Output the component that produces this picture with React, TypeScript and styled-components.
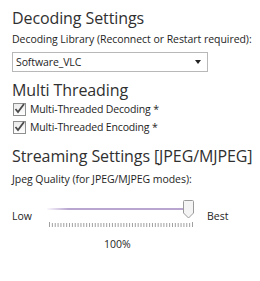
import styled, { createGlobalStyle } from "styled-components";

const Global = createGlobalStyle`
  body {
    margin: 0;
    background: #fff;
    font-family: "Open Sans", "Liberation Sans", sans-serif;
    color: #1e1e1e;
  }
`;

const Panel = styled.div`
  width: 260px;
  height: 281px;
  padding: 8px 0 0 12px;
  box-sizing: border-box;
  overflow: hidden;
`;

const Heading = styled.div<{ mT?: number }>`
  font-size: 16px;
  line-height: 20px;
  color: #303030;
  margin-top: ${p => p.mT ?? 0}px;
  letter-spacing: -0.1px;
`;

const Label = styled.div<{ mT?: number }>`
  font-size: 10.5px;
  line-height: 14px;
  margin-top: ${p => p.mT ?? 0}px;
  letter-spacing: -0.05px;
`;

const Select = styled.div`
  margin-top: 6px;
  width: 196px;
  height: 20px;
  box-sizing: border-box;
  border: 1px solid #b8b8b8;
  display: flex;
  align-items: center;
  justify-content: space-between;
  padding: 0 6px 0 3px;
  font-size: 10.5px;
  letter-spacing: -0.1px;
`;

const Arrow = styled.span`
  width: 0;
  height: 0;
  border-left: 3.5px solid transparent;
  border-right: 3.5px solid transparent;
  border-top: 4px solid #222;
`;

const CheckRow = styled.div`
  display: flex;
  align-items: center;
  gap: 4px;
  height: 18px;
  margin-left: 1px;
  font-size: 10.5px;
  letter-spacing: -0.15px;
`;

const Box = styled.span`
  width: 11px;
  height: 11px;
  border: 1px solid #8e8f8f;
  background: linear-gradient(#ececec, #fdfdfd);
  position: relative;
  box-sizing: content-box;
`;

const SliderRow = styled.div`
  display: flex;
  align-items: center;
  margin-top: 8px;
  height: 40px;
`;

const SideText = styled.span<{ w: number; pL?: number }>`
  width: ${p => p.w}px;
  padding-left: ${p => p.pL ?? 0}px;
  font-size: 10.5px;
  padding-top: 4px;
`;

const Track = styled.div`
  position: relative;
  width: 150px;
  height: 40px;
  margin-left: 3px;
`;

const Line = styled.div`
  position: absolute;
  left: 0;
  right: 6px;
  top: 14px;
  height: 2px;
  background: linear-gradient(90deg, #fbf8fd, #b8a6d0 15%, #b8a6d0);
`;

const Thumb = styled.svg`
  position: absolute;
  left: 136px;
  top: 6px;
`;

const Ticks = styled.svg`
  position: absolute;
  left: 2px;
  top: 28px;
`;

const Value = styled.div`
  margin-top: 3px;
  padding-left: 92px;
  font-size: 10.5px;
`;

const CheckIcon = () => (
  <Box>
    <svg width="13" height="13" viewBox="0 0 13 13" style={{ position: "absolute", left: -1, top: -2 }}>
      <path d="M2.5 7 L5 10 L11 2" stroke="#4a4a4a" strokeWidth="1.8" fill="none" />
    </svg>
  </Box>
);

export default function App() {
  const ticks = Array.from({ length: 51 }, (_, i) => i);
  return (
    <>
      <Global />
      <Panel>
        <Heading>Decoding Settings</Heading>
        <Label mT={4}>Decoding Library (Reconnect or Restart required):</Label>
        <Select>
          <span>Software_VLC</span>
          <Arrow />
        </Select>
        <Heading mT={8}>Multi Threading</Heading>
        <CheckRow><CheckIcon />Multi-Threaded Decoding *</CheckRow>
        <CheckRow><CheckIcon />Multi-Threaded Encoding *</CheckRow>
        <Heading mT={10}>Streaming Settings [JPEG/MJPEG]</Heading>
        <Label mT={6}>Jpeg Quality (for JPEG/MJPEG modes):</Label>
        <SliderRow>
          <SideText w={32}>Low</SideText>
          <Track>
            <Line />
            <Ticks width="146" height="5">
              {ticks.map(i => (
                <line key={i} x1={i * 2.86 + 0.5} x2={i * 2.86 + 0.5} y1={i === 0 || i === 50 ? 0 : 1} y2="5" stroke="#a0a0a0" strokeWidth="1" />
              ))}
            </Ticks>
            <Thumb width="11" height="19" viewBox="0 0 11 19">
              <path d="M0.5 1.5 Q0.5 0.5 1.5 0.5 L9.5 0.5 Q10.5 0.5 10.5 1.5 L10.5 13 L5.5 18 L0.5 13 Z" fill="#f4f4f4" stroke="#9a9a9a" />
            </Thumb>
          </Track>
          <SideText w={40} pL={10}>Best</SideText>
        </SliderRow>
        <Value>100%</Value>
      </Panel>
    </>
  );
}
